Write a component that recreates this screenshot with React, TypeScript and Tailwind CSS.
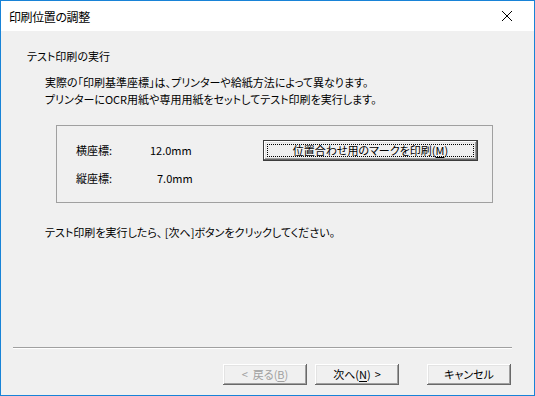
import React from "react";

const jp = { fontFamily: '"Noto Sans CJK JP", "Noto Sans", sans-serif' } as React.CSSProperties;

function ClassicButton({
  children,
  className = "",
  disabled = false,
}: {
  children: React.ReactNode;
  className?: string;
  disabled?: boolean;
}) {
  return (
    <div
      className={`h-[21px] flex items-center justify-center bg-[#f0f0f0] text-[11px] [font-feature-settings:'palt'] shadow-[inset_-1px_-1px_0_#696969,inset_1px_1px_0_#ffffff,inset_-2px_-2px_0_#a0a0a0,inset_2px_2px_0_#e3e3e3] ${
        disabled ? "text-[#a0a0a0]" : "text-black"
      } ${className}`}
    >
      {children}
    </div>
  );
}

export default function App() {
  return (
    <div
      style={jp}
      className="w-[535px] h-[396px] border border-[#1883d7] flex flex-col bg-[#f0f0f0] text-black leading-[17px] overflow-hidden"
    >
      {/* Title bar */}
      <div className="h-[30px] bg-white flex items-center justify-between shrink-0">
        <span className="ml-[8px] text-[12px] tracking-[-0.4px] [font-feature-settings:'palt'] text-black">印刷位置の調整</span>
        <svg width="12" height="12" viewBox="0 0 12 12" className="mr-[21px]">
          <path d="M1 1 L11 11 M11 1 L1 11" stroke="#000" strokeWidth="1" />
        </svg>
      </div>

      {/* Body */}
      <div className="flex-1 flex flex-col text-[11px] [font-feature-settings:'palt']">
        <div className="mt-[17px] ml-[26px] h-[17px]">テスト印刷の実行</div>
        <div className="mt-[9px] ml-[44px] h-[17px]">
          実際の「印刷基準座標」は、プリンターや給紙方法によって異なります。
        </div>
        <div className="ml-[44px] h-[17px]">
          プリンターにOCR用紙や専用用紙をセットしてテスト印刷を実行します。
        </div>

        {/* Group box */}
        <div className="mt-[17px] ml-[55px] w-[437px] h-[78px] border border-[#a0a0a0] flex flex-col">
          <div className="mt-[14px] h-[21px] flex items-center">
            <span className="ml-[19px] w-[74px]">横座標:</span>
            <span className="w-[113px]">12.0mm</span>
            <div className="w-[215px] h-[21px] border border-[#3c3c3c] bg-[#f0f0f0] shadow-[inset_-1px_-1px_0_#696969,inset_1px_1px_0_#ffffff,inset_-2px_-2px_0_#a0a0a0,inset_2px_2px_0_#e3e3e3] p-[3px]">
              <div className="h-full border border-dotted border-black flex items-center justify-center">
                位置合わせ用のマークを印刷(<span className="underline underline-offset-2">M</span>)
              </div>
            </div>
          </div>
          <div className="mt-[9px] h-[17px] flex items-center">
            <span className="ml-[19px] w-[74px]">縦座標:</span>
            <span className="pl-[7px]">7.0mm</span>
          </div>
        </div>

        <div className="mt-[21px] ml-[44px] h-[17px]">
          テスト印刷を実行したら、 [次へ]ボタンをクリックしてください。
        </div>

        {/* Footer */}
        <div className="mt-auto">
          <div className="ml-[12px] w-[499px] h-[1px] bg-[#a0a0a0]" />
          <div className="ml-[12px] w-[499px] h-[1px] bg-white" />
          <div className="mt-[15px] mb-[10px] flex">
            <ClassicButton disabled className="ml-[222px] w-[84px]">
              <span className="mr-[5px]">&lt;</span>戻る(<span className="underline underline-offset-2">B</span>)
            </ClassicButton>
            <ClassicButton className="ml-[8px] w-[84px]">
              次へ(<span className="underline underline-offset-2">N</span>)<span className="ml-[4px]">&gt;</span>
            </ClassicButton>
            <ClassicButton className="ml-[28px] w-[84px]">キャンセル</ClassicButton>
          </div>
        </div>
      </div>
    </div>
  );
}
